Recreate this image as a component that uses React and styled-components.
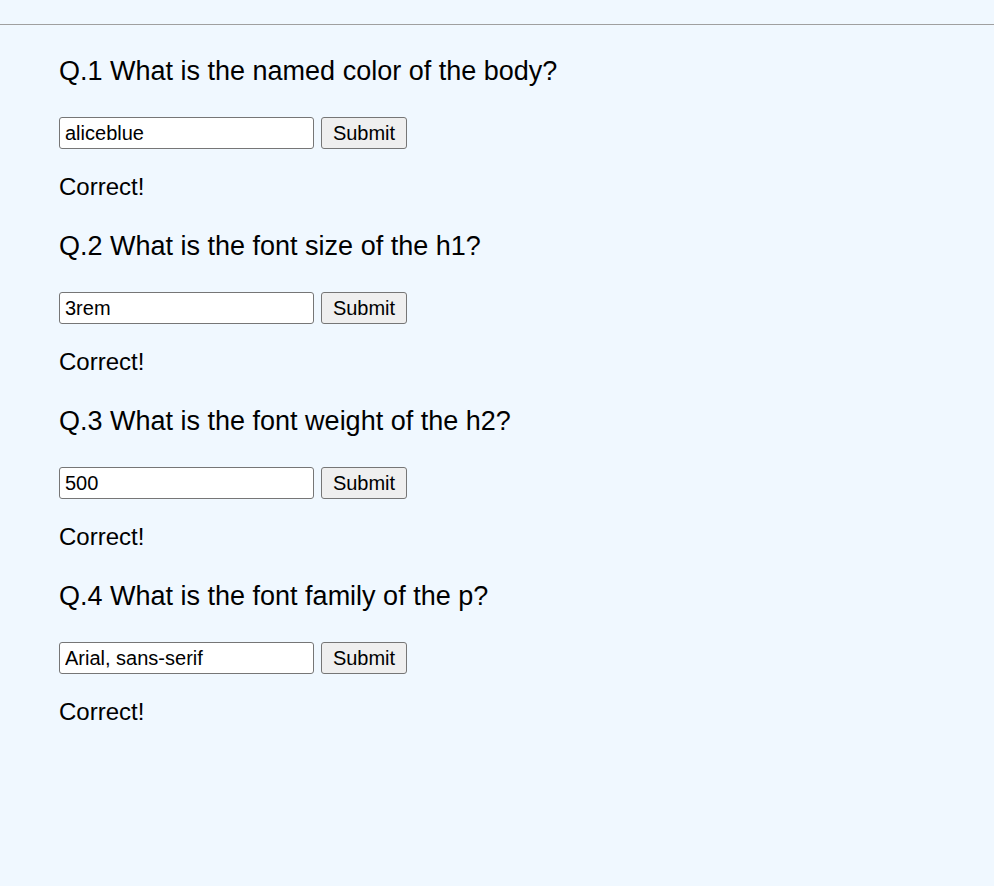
import React, { useState } from "react";
import styled, { createGlobalStyle } from "styled-components";

const Global = createGlobalStyle`
  html, body {
    margin: 0;
    padding: 0;
    background: aliceblue;
  }
  body {
    font-family: "Liberation Sans", Arial, sans-serif;
    color: #000;
  }
`;

const Page = styled.div`
  min-height: 886px;
  background: aliceblue;
`;

const TopBar = styled.header`
  height: 24px;
  border-bottom: 1px solid #a0a0a0;
`;

const Quiz = styled.main`
  display: flex;
  flex-direction: column;
  padding: 31px 0 0 59px;
`;

const Block = styled.section`
  display: flex;
  flex-direction: column;
  align-items: flex-start;
  padding-bottom: 30px;
`;

const Question = styled.h2`
  margin: 0;
  font-size: 27px;
  line-height: 31px;
  font-weight: 400;
`;

const Row = styled.form`
  display: flex;
  align-items: stretch;
  gap: 7px;
  margin: 30px 0 24px;
`;

const Field = styled.input`
  box-sizing: border-box;
  width: 255px;
  height: 32px;
  margin: 0;
  padding: 0 5px;
  border: 1px solid #767676;
  border-radius: 3px;
  background: #fff;
  font-family: "Liberation Sans", Arial, sans-serif;
  font-size: 20px;
  color: #000;
  outline: none;
`;

const Button = styled.button`
  box-sizing: border-box;
  width: 86px;
  height: 32px;
  margin: 0;
  padding: 0;
  border: 1px solid #767676;
  border-radius: 3px;
  background: #efefef;
  font-family: "Liberation Sans", Arial, sans-serif;
  font-size: 20px;
  color: #000;
  cursor: pointer;
`;

const Result = styled.p`
  margin: 0;
  font-size: 24px;
  line-height: 28px;
`;

const questions = [
  { q: "Q.1 What is the named color of the body?", a: "aliceblue" },
  { q: "Q.2 What is the font size of the h1?", a: "3rem" },
  { q: "Q.3 What is the font weight of the h2?", a: "500" },
  { q: "Q.4 What is the font family of the p?", a: "Arial, sans-serif" },
];

function QuestionBlock({ q, a }) {
  const [value, setValue] = useState(a);
  return (
    <Block>
      <Question>{q}</Question>
      <Row onSubmit={(e) => e.preventDefault()}>
        <Field value={value} onChange={(e) => setValue(e.target.value)} />
        <Button type="submit">Submit</Button>
      </Row>
      <Result>Correct!</Result>
    </Block>
  );
}

export default function App() {
  return (
    <Page>
      <Global />
      <TopBar />
      <Quiz>
        {questions.map((item) => (
          <QuestionBlock key={item.q} {...item} />
        ))}
      </Quiz>
    </Page>
  );
}
